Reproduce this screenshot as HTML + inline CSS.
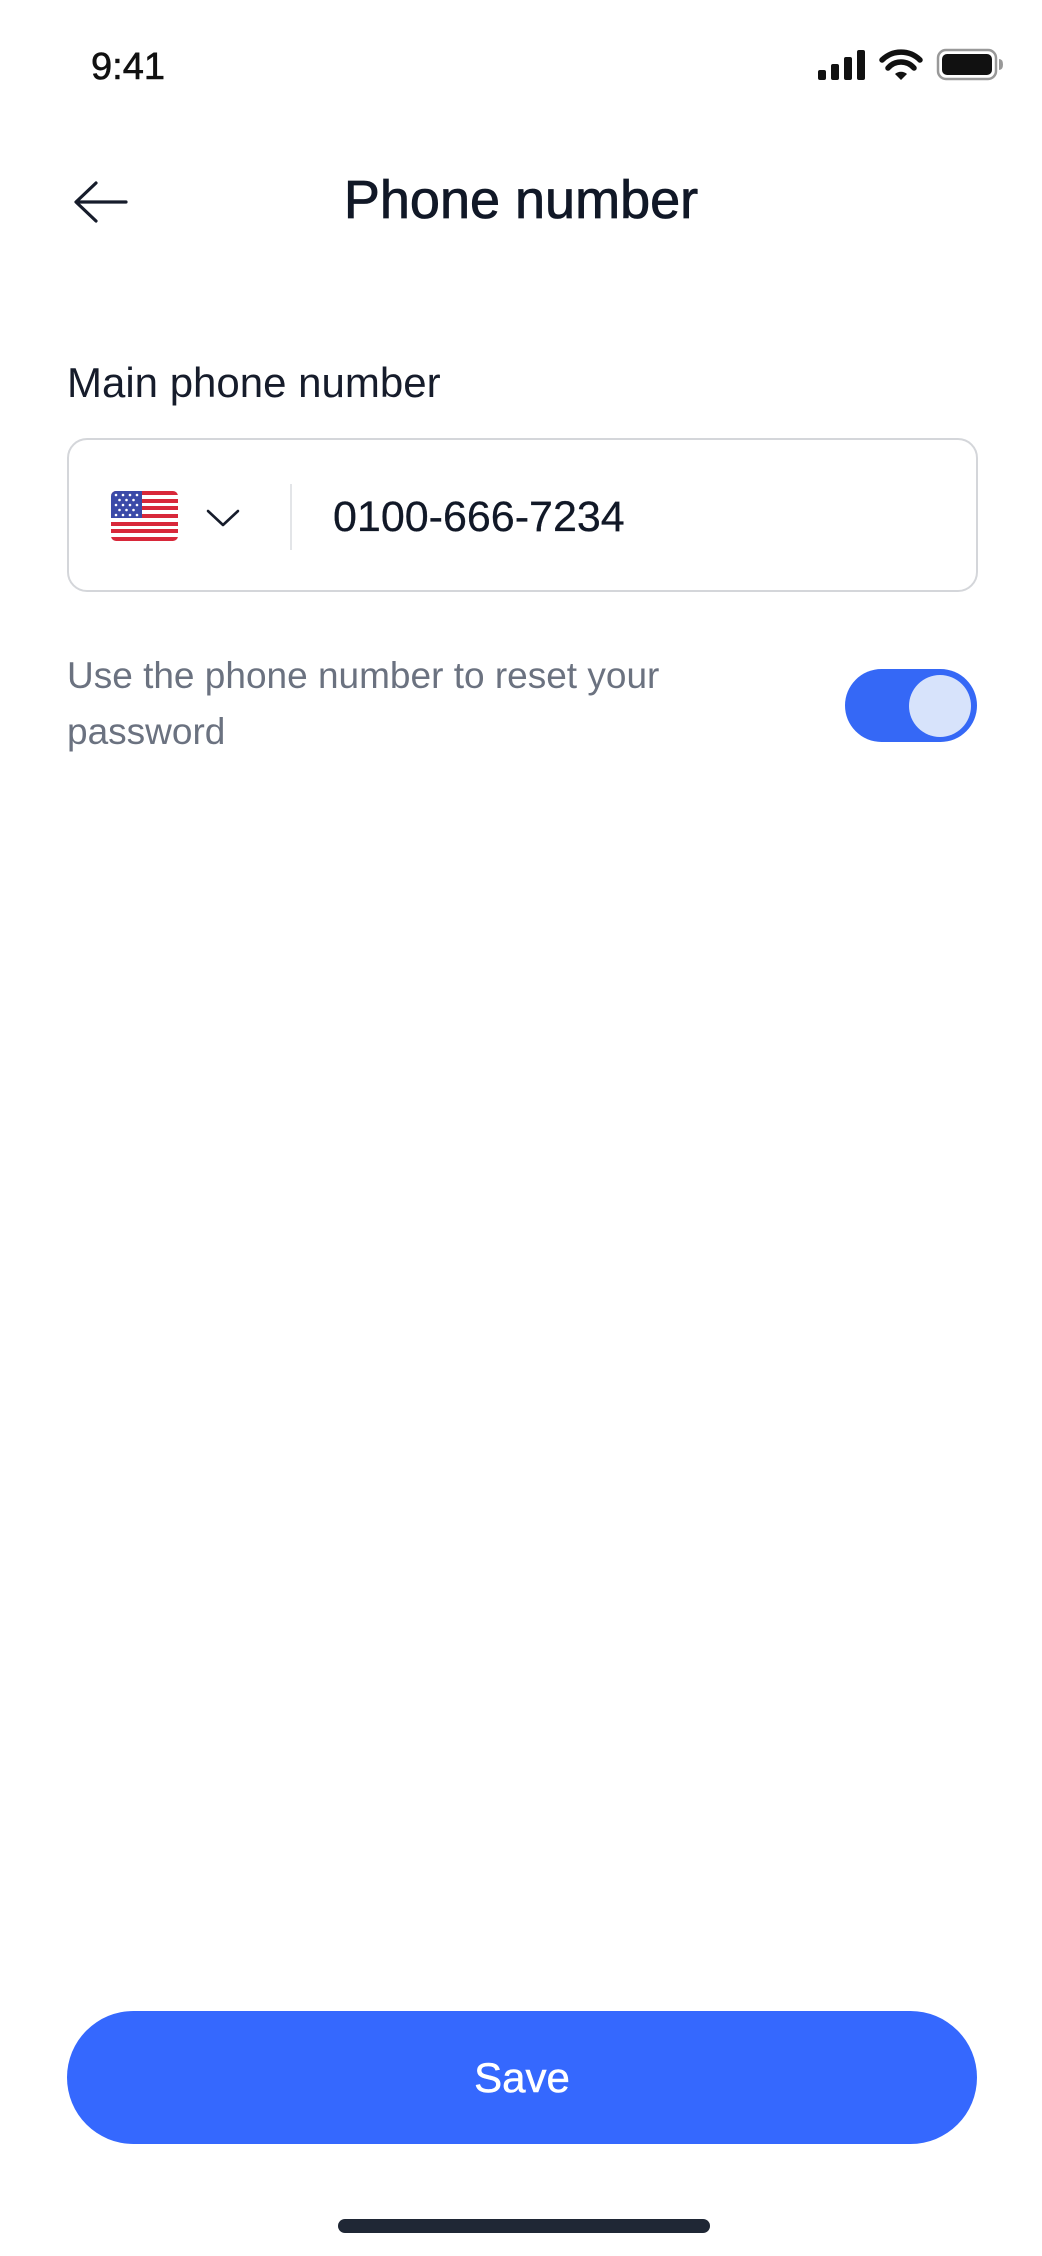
<!DOCTYPE html>
<html><head><meta charset="utf-8"><style>
*{margin:0;padding:0;box-sizing:border-box}
body{width:1042px;height:2256px;background:#fff;position:relative;overflow:hidden;font-family:"Liberation Sans",sans-serif;color:#161c2b}
.a{position:absolute;white-space:nowrap}
</style></head><body>
<div class="a" style="left:91px;top:45px;font-size:38px;line-height:44px;color:#111;-webkit-text-stroke:0.6px #111">9:41</div>
<svg class="a" style="left:816px;top:47px" width="190" height="36" viewBox="0 0 190 36">
 <rect x="2" y="23" width="8" height="10" rx="2" fill="#111"/>
 <rect x="15" y="17" width="8" height="16" rx="2" fill="#111"/>
 <rect x="28" y="10" width="8" height="23" rx="2" fill="#111"/>
 <rect x="41" y="3" width="8" height="30" rx="2" fill="#111"/>
 <path d="M66 13 A27 27 0 0 1 104 13" stroke="#111" stroke-width="5.5" fill="none" stroke-linecap="round"/>
 <path d="M72 21 A17 17 0 0 1 98 21" stroke="#111" stroke-width="5.5" fill="none" stroke-linecap="round"/>
 <path d="M79 27 L85 33 L91 27 A9 9 0 0 0 79 27Z" fill="#111"/>
 <rect x="122" y="3" width="58" height="29" rx="8" fill="none" stroke="#999" stroke-width="2.5"/>
 <rect x="126" y="7" width="50" height="21" rx="5" fill="#111"/>
 <path d="M183 12 q4 0 4 5.5 q0 5.5 -4 5.5z" fill="#999"/>
</svg>
<svg class="a" style="left:72px;top:180px" width="58" height="44" viewBox="0 0 58 44">
 <path d="M54 22 H5 M24 3 L4 22 L24 41" stroke="#161c2b" stroke-width="3.2" fill="none" stroke-linecap="round" stroke-linejoin="round"/>
</svg>
<div class="a" style="left:0;width:1042px;text-align:center;top:168px;font-size:54px;line-height:64px;color:#111827;-webkit-text-stroke:0.8px #111827">Phone number</div>
<div class="a" style="left:67px;top:358px;font-size:42px;line-height:50px;color:#161c2b">Main phone number</div>
<div class="a" style="left:67px;top:438px;width:911px;height:154px;border:2px solid #d4d6da;border-radius:20px"></div>
<svg class="a" style="left:111px;top:491px" width="67" height="50" viewBox="0 0 67 50">
 <defs><clipPath id="c"><rect width="67" height="50" rx="5"/></clipPath></defs>
 <g clip-path="url(#c)">
 <rect width="67" height="50" fill="#fff"/>
 <rect y="0" width="67" height="4" fill="#d8283a"/>
 <rect y="8" width="67" height="4" fill="#d8283a"/>
 <rect y="15" width="67" height="4" fill="#d8283a"/>
 <rect y="23" width="67" height="4" fill="#d8283a"/>
 <rect y="31" width="67" height="4" fill="#d8283a"/>
 <rect y="38" width="67" height="4" fill="#d8283a"/>
 <rect y="46" width="67" height="4" fill="#d8283a"/>
 <rect width="31" height="27" fill="#3b4aa8"/>
 <g fill="#fff"><circle cx="5" cy="4" r="1.3"/><circle cx="12" cy="4" r="1.3"/><circle cx="19" cy="4" r="1.3"/><circle cx="26" cy="4" r="1.3"/>
 <circle cx="8.5" cy="9" r="1.3"/><circle cx="15.5" cy="9" r="1.3"/><circle cx="22.5" cy="9" r="1.3"/>
 <circle cx="5" cy="14" r="1.3"/><circle cx="12" cy="14" r="1.3"/><circle cx="19" cy="14" r="1.3"/><circle cx="26" cy="14" r="1.3"/>
 <circle cx="8.5" cy="19" r="1.3"/><circle cx="15.5" cy="19" r="1.3"/><circle cx="22.5" cy="19" r="1.3"/>
 <circle cx="5" cy="24" r="1.3"/><circle cx="12" cy="24" r="1.3"/><circle cx="19" cy="24" r="1.3"/><circle cx="26" cy="24" r="1.3"/></g>
 </g>
</svg>
<svg class="a" style="left:205px;top:506px" width="36" height="24" viewBox="0 0 36 24">
 <path d="M3 5 L18 19 L33 5" stroke="#161c2b" stroke-width="2.6" fill="none" stroke-linecap="round" stroke-linejoin="round"/>
</svg>
<div class="a" style="left:290px;top:484px;width:2px;height:66px;background:#e3e5e8"></div>
<div class="a" style="left:333px;top:492px;font-size:43px;line-height:50px;color:#111827;-webkit-text-stroke:0.3px #111827">0100-666-7234</div>
<div class="a" style="left:67px;top:648px;font-size:37px;line-height:56px;color:#6b7280;white-space:normal;width:640px">Use the phone number to reset your<br>password</div>
<div class="a" style="left:845px;top:669px;width:132px;height:73px;border-radius:37px;background:#3568f6"></div>
<div class="a" style="left:909px;top:675px;width:62px;height:62px;border-radius:50%;background:#d7e3fb"></div>
<div class="a" style="left:67px;top:2011px;width:910px;height:133px;border-radius:67px;background:#3568fe;color:#fff;font-size:42px;text-align:center;line-height:133px;-webkit-text-stroke:0.5px #fff">Save</div>
<div class="a" style="left:338px;top:2219px;width:372px;height:14px;border-radius:7px;background:#1f2735"></div>
</body></html>
